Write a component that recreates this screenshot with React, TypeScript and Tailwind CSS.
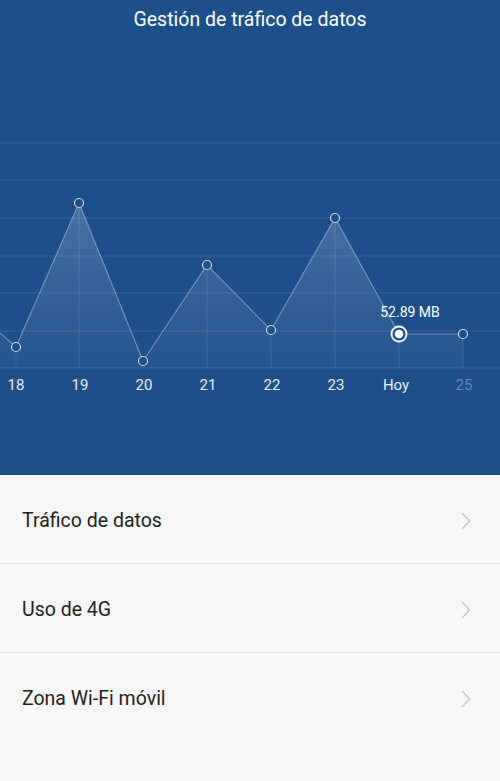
import { FC } from 'react';

const points = [
  { x: -48, y: 291 },
  { x: 16, y: 347 },
  { x: 79, y: 203 },
  { x: 143, y: 361 },
  { x: 207, y: 265 },
  { x: 271, y: 330 },
  { x: 335, y: 218 },
  { x: 399, y: 334 },
  { x: 463, y: 334 },
];

const days = ['18', '19', '20', '21', '22', '23', 'Hoy', '25'];
const grid = [143, 180, 218, 256, 293, 331, 368];
const menu = ['Tráfico de datos', 'Uso de 4G', 'Zona Wi-Fi móvil'];

// svg starts at page y = 40
const OFF = 40;
const BASE = 368 - OFF;

const Chart: FC = () => {
  const pts = points.map((p) => ({ x: p.x, y: p.y - OFF }));
  const line = pts.map((p) => `${p.x},${p.y}`).join(' ');
  const area = `${pts[0].x},${BASE} ${line} ${pts[pts.length - 1].x},${BASE}`;

  return (
    <svg width="500" height="332" viewBox="0 0 500 332" className="block">
      <defs>
        <linearGradient id="fill" x1="0" y1="160" x2="0" y2={BASE} gradientUnits="userSpaceOnUse">
          <stop offset="0" stopColor="#ffffff" stopOpacity="0.2" />
          <stop offset="1" stopColor="#ffffff" stopOpacity="0.03" />
        </linearGradient>
      </defs>
      {grid.map((g) => (
        <line key={g} x1="0" x2="500" y1={g - OFF} y2={g - OFF} stroke="#ffffff" strokeOpacity="0.11" strokeWidth="1" />
      ))}
      <polygon points={area} fill="url(#fill)" />
      {pts.slice(1).map((p, i) => (
        <line key={i} x1={p.x} x2={p.x} y1={p.y} y2={BASE} stroke="#ffffff" strokeOpacity="0.12" strokeWidth="1" />
      ))}
      <polyline points={line} fill="none" stroke="#ffffff" strokeOpacity="0.35" strokeWidth="1.2" />
      {pts.slice(1).map((p, i) =>
        i === 6 ? (
          <g key={i}>
            <circle cx={p.x} cy={p.y} r="7.5" fill="#1d4f8b" stroke="#ffffff" strokeWidth="1.8" />
            <circle cx={p.x} cy={p.y} r="4.3" fill="#ffffff" />
          </g>
        ) : (
          <circle key={i} cx={p.x} cy={p.y} r="4.5" fill="#1d4f8b" stroke="#ffffff" strokeOpacity="0.8" strokeWidth="1.2" />
        ),
      )}
      <text x="410" y={317 - OFF} textAnchor="middle" fill="#ffffff" fontSize="14" fontFamily="Roboto, sans-serif">
        52.89 MB
      </text>
    </svg>
  );
};

const Chevron: FC = () => (
  <svg width="10" height="18" viewBox="0 0 10 18" fill="none">
    <path d="M1.5 1.5 L8.5 9 L1.5 16.5" stroke="#c4c4c4" strokeWidth="1.4" strokeLinecap="round" strokeLinejoin="round" />
  </svg>
);

export default function App() {
  return (
    <div className="w-[500px] h-[781px] bg-[#f7f7f7] font-['Roboto',sans-serif] overflow-hidden">
      <div className="h-[475px] bg-[#1d4f8b]">
        <div className="h-[40px] flex items-center justify-center text-white text-[19.5px]">
          Gestión de tráfico de datos
        </div>
        <Chart />
        <div className="flex -ml-4 mt-[2px]">
          {days.map((d, i) => (
            <div
              key={d}
              className={`w-16 shrink-0 text-center text-[15px] ${i === 7 ? 'text-white/35' : 'text-white/90'} ${i === 6 ? 'pr-2' : ''}`}
            >
              {d}
            </div>
          ))}
        </div>
      </div>
      <div>
        {menu.map((m, i) => (
          <div
            key={m}
            className={`h-[89px] pt-[3px] flex items-center justify-between pl-[22px] pr-[29px] ${i < 2 ? 'border-b border-[#e2e2e2]' : ''}`}
          >
            <span className="text-[19.5px] text-[#222222]">{m}</span>
            <Chevron />
          </div>
        ))}
      </div>
    </div>
  );
}
